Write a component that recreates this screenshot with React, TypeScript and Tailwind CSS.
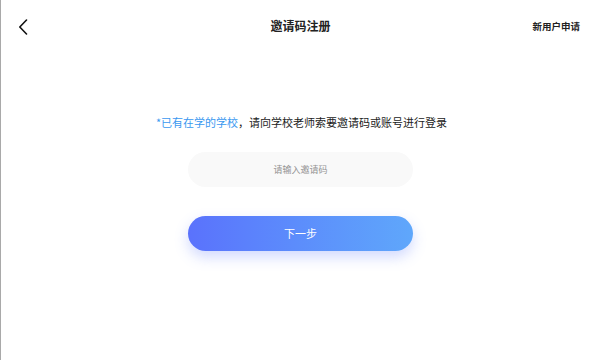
import React from "react";

export default function App() {
  return (
    <div
      className="w-[600px] h-[360px] bg-white border-l border-[#a9a9a9] flex flex-col"
      style={{ fontFamily: '"Noto Sans CJK SC", "Noto Sans", sans-serif' }}
    >
      <div className="h-[52px] flex items-center justify-between pl-[17px] pr-[20px] relative">
        <svg width="10" height="16" viewBox="0 0 10 16" fill="none" className="mt-[1px]">
          <path d="M8.5 1 L1.8 8 L8.5 15" stroke="#111" strokeWidth="1.6" strokeLinecap="round" strokeLinejoin="round" />
        </svg>
        <div className="absolute left-0 right-0 text-center text-[12px] leading-[16px] font-bold text-[#222] pointer-events-none">
          邀请码注册
        </div>
        <div className="text-[9.5px] leading-[14px] font-bold text-[#222]">新用户申请</div>
      </div>
      <div className="flex flex-col items-center">
        <div className="mt-[62px] text-[11px] leading-[16px] text-[#222] pl-[2px]">
          <span className="text-[#3a98f0]">*已有在学的学校</span>，请向学校老师索要邀请码或账号进行登录
        </div>
        <div className="mt-[22px] w-[225px] h-[35px] rounded-full bg-[#f9f9f9] flex items-center justify-center text-[9px] text-[#939393]">
          请输入邀请码
        </div>
        <div className="mt-[29px] w-[225px] h-[35px] rounded-full bg-gradient-to-r from-[#5a72fc] to-[#5fa7fb] shadow-[0_6px_14px_rgba(90,120,250,0.28)] flex items-center justify-center text-[11px] text-white">
          下一步
        </div>
      </div>
    </div>
  );
}
